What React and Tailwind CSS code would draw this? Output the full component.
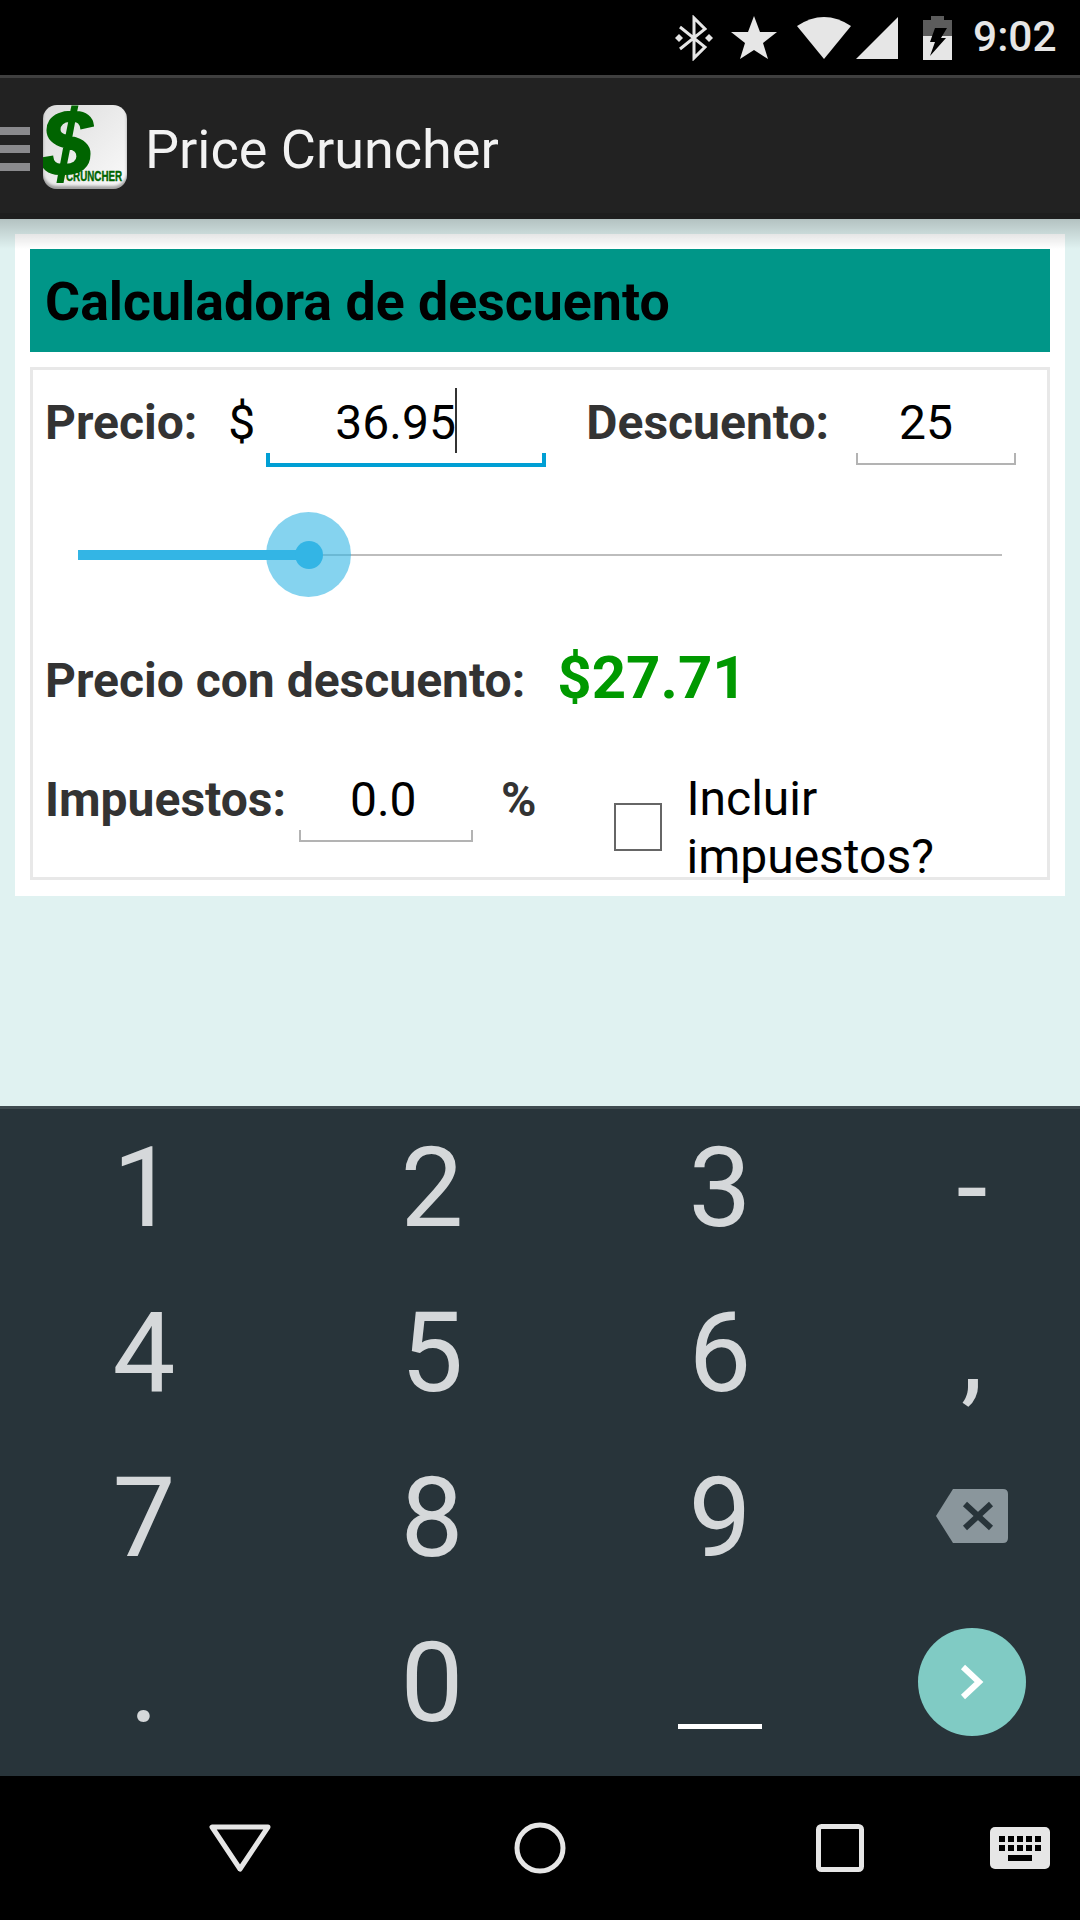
const roboto = "font-['Roboto',sans-serif]";

function Field({ value, width, textClass = "", caret = false, active = false }) {
  const tone = active ? "border-[#009fd4]" : "border-[#b3b3b3]";
  const ticks = active ? "h-[14px] border-x-4 border-b-4" : "h-[12px] border-x-2 border-b-2";
  return (
    <div className={`flex flex-col ${width}`}>
      <div className={`flex h-[64px] items-center pt-[4px] text-[48px] text-black ${textClass}`}>
        <span className="leading-none">{value}</span>
        {caret && <span className="mt-[-5px] ml-[-1px] h-[65px] w-[2px] self-start bg-[#333]" />}
      </div>
      <div className={`${ticks} ${tone}`} />
    </div>
  );
}

function StatusBar() {
  return (
    <div className="flex h-[75px] items-center bg-black pl-[675px] text-[#e6e6e6]">
      <svg width="38" height="46" viewBox="0 0 38 46" className="mr-[18px] shrink-0">
        <path d="M5 12 L30 32 L19 43 V3 L30 14 L5 34" fill="none" stroke="#e6e6e6" strokeWidth="3" />
        <path d="M0 23l4-4 4 4-4 4zM30 23l4-4 4 4-4 4z" fill="#e6e6e6" />
      </svg>
      <svg width="46" height="44" viewBox="0 0 46 44" className="mr-[20px] shrink-0">
        <path d="M23 0 L29 16 L46 16 L32 27 L37 43 L23 34 L9 43 L14 27 L0 16 L17 16 Z" fill="#e6e6e6" />
      </svg>
      <svg width="54" height="44" viewBox="0 0 54 44" className="mr-[5px] shrink-0">
        <path d="M27 43 L0 10 Q27 -8 54 10 Z" fill="#e6e6e6" />
      </svg>
      <svg width="42" height="42" viewBox="0 0 42 42" className="mr-[25px] shrink-0">
        <path d="M42 0 V42 H0 Z" fill="#e6e6e6" />
      </svg>
      <svg width="29" height="44" viewBox="0 0 29 44" className="mr-[21px] shrink-0">
        <path d="M8 0 H21 V4 H29 V20 H0 V4 H8 Z" fill="#5c5c5c" />
        <path d="M0 20 H29 V44 H0 Z" fill="#e6e6e6" />
        <path d="M12 12 H24 L18 22 H23 L7 40 L12 26 H7 Z" fill="#000" />
      </svg>
      <span className={`${roboto} text-[42.5px] font-medium leading-none`}>9:02</span>
    </div>
  );
}

function Logo() {
  return (
    <div className="relative mb-[4px] h-[84px] w-[84px] shrink-0 overflow-hidden rounded-[14px] bg-gradient-to-br from-[#dcdcdc] to-[#fafafa] shadow-[inset_0_-3px_3px_rgba(0,0,0,0.35)]">
      <span className="absolute left-[-2px] top-[-17px] font-['Liberation_Sans',sans-serif] text-[92px] font-bold italic leading-[110px] text-[#006400] [-webkit-text-stroke:2px_#006400]">
        $
      </span>
      <span className="absolute bottom-[6px] right-[5px] origin-right scale-x-[0.7] whitespace-nowrap font-['Liberation_Sans',sans-serif] text-[14px] font-bold leading-none text-[#006400] [-webkit-text-stroke:0.4px_#006400]">
        CRUNCHER
      </span>
    </div>
  );
}

function ActionBar() {
  return (
    <div className="flex h-[144px] items-center border-t-[3px] border-[#3f3f3f] bg-[#222222] shadow-[inset_0_-6px_0_#1e1e1e]">
      <div className="mr-[13px] flex h-[44px] w-[30px] flex-col justify-between">
        <div className="h-[8px] bg-[#8a8a8d]" />
        <div className="h-[8px] bg-[#8a8a8d]" />
        <div className="h-[8px] bg-[#8a8a8d]" />
      </div>
      <Logo />
      <span className={`${roboto} ml-[18px] pt-[1px] text-[54px] text-[#f2f2f2]`}>Price Cruncher</span>
    </div>
  );
}

function Slider() {
  return (
    <div className="relative ml-[45px] mt-[45px] flex h-[86px] w-[924px] items-center">
      <div className="h-[10px] w-[231px] bg-[#33b5e5]" />
      <div className="h-[2px] flex-1 bg-[#bdbdbd]" />
      <div className="absolute left-[188px] top-0 flex h-[85px] w-[85px] items-center justify-center rounded-full bg-[#33b5e5]/60">
        <div className="h-[28px] w-[28px] rounded-full bg-[#33b5e5]" />
      </div>
    </div>
  );
}

function Calculator() {
  return (
    <div className={`${roboto} mx-[15px] bg-white p-[15px] pb-[16px]`}>
      <div className="flex h-[103px] items-center bg-[#009688] pl-[15px] pt-[4px] text-[53.7px] font-bold text-black">
        Calculadora de descuento
      </div>
      <div className="mt-[15px] h-[513px] border-[3px] border-[#e8e8e8] text-[#333]">
        <div className="flex pl-[12px] pt-[19px]">
          <span className="h-[64px] text-[48px] font-bold leading-[68px]">Precio:</span>
          <span className="ml-[31px] h-[64px] text-[48px] leading-[68px] text-black">$</span>
          <Field value="36.95" width="ml-[11px] w-[280px]" textClass="pl-[69px]" caret active />
          <span className="ml-[40px] h-[64px] text-[48px] font-bold leading-[68px]">Descuento:</span>
          <Field value="25" width="ml-[27px] w-[160px]" textClass="pl-[43px]" />
        </div>
        <Slider />
        <div className="mt-[48px] flex items-center pl-[12px]">
          <span className="text-[48px] font-bold leading-[64px]">Precio con descuento:</span>
          <span className="mb-[6px] ml-[32px] text-[60px] font-bold leading-[64px] text-[#009900]">$27.71</span>
        </div>
        <div className="mt-[50px] flex pl-[12px]">
          <span className="h-[64px] text-[48px] font-bold leading-[68px]">Impuestos:</span>
          <Field value="0.0" width="ml-[13px] w-[174px]" textClass="pl-[51px]" />
          <span className="ml-[28px] h-[64px] text-[48px] font-bold leading-[68px]">%</span>
          <div className="ml-[78px] mt-[37px] h-[48px] w-[48px] border-2 border-[#666]" />
          <div className="relative ml-[24px] mt-[4px] text-[48px] leading-[58px] text-black">
            Incluir
            <br />
            impuestos?
          </div>
        </div>
      </div>
    </div>
  );
}

function Backspace() {
  return (
    <svg width="72" height="54" viewBox="0 0 72 54" className="mb-[3px]">
      <path d="M17 0 H67 Q72 0 72 5 V49 Q72 54 67 54 H17 L0 27 Z" fill="#8a969c" />
      <path d="M29 15 L55 39 M55 15 L29 39" stroke="#28343a" strokeWidth="6" fill="none" />
    </svg>
  );
}

const keys = [
  "1", "2", "3", "-",
  "4", "5", "6", ",",
  "7", "8", "9", "back",
  ".", "0", "space", "next",
];

function Key({ value }) {
  if (value === "back") return <Backspace />;
  if (value === "space") return <div className="mt-[88px] h-[5px] w-[84px] bg-white" />;
  if (value === "next") {
    return (
      <div className="mb-[2px] flex h-[108px] w-[108px] items-center justify-center rounded-full bg-[#80cbc4]">
        <svg width="24" height="36" viewBox="0 0 24 36">
          <path d="M3 3 L19 18 L3 33" fill="none" stroke="#fff" strokeWidth="6" />
        </svg>
      </div>
    );
  }
  return <span className="text-[112px] leading-none text-[#d5d8da]">{value}</span>;
}

function Keyboard() {
  return (
    <div className={`${roboto} grid h-[670px] grid-cols-[288px_288px_288px_216px] grid-rows-[165px_165px_165px_165px] border-t-[3px] border-[#3f4b50] bg-[#28343a]`}>
      {keys.map((k) => (
        <div key={k} className="flex items-center justify-center pb-[8px]">
          <Key value={k} />
        </div>
      ))}
    </div>
  );
}

function NavBar() {
  return (
    <div className="flex h-[144px] items-center bg-black pl-[209px]">
      <svg width="62" height="48" viewBox="0 0 62 48" className="shrink-0">
        <path d="M3 3 H59 L31 45 Z" fill="none" stroke="#e6e6e6" strokeWidth="5" strokeLinejoin="round" />
      </svg>
      <svg width="52" height="52" viewBox="0 0 52 52" className="ml-[243px] shrink-0">
        <circle cx="26" cy="26" r="23" fill="none" stroke="#e6e6e6" strokeWidth="5" />
      </svg>
      <svg width="48" height="48" viewBox="0 0 48 48" className="ml-[250px] shrink-0">
        <rect x="2.5" y="2.5" width="43" height="43" rx="3" fill="none" stroke="#e6e6e6" strokeWidth="5" />
      </svg>
      <svg width="60" height="42" viewBox="0 0 60 42" className="ml-[126px] shrink-0">
        <rect width="60" height="42" rx="5" fill="#e6e6e6" />
        <path d="M9 9h6v6H9zM18 9h6v6h-6zM27 9h6v6h-6zM36 9h6v6h-6zM45 9h6v6h-6zM9 18h6v6H9zM18 18h6v6h-6zM27 18h6v6h-6zM36 18h6v6h-6zM45 18h6v6h-6zM18 28h24v6H18z" fill="#000" />
      </svg>
    </div>
  );
}

export default function App() {
  return (
    <div className="flex h-[1920px] w-[1080px] flex-col overflow-hidden bg-[#e0f2f1]">
      <StatusBar />
      <ActionBar />
      <div className="relative flex-1 pt-[15px]">
        <Calculator />
        <div className="pointer-events-none absolute inset-x-0 top-0 h-[30px] bg-gradient-to-b from-black/20 to-transparent" />
      </div>
      <Keyboard />
      <NavBar />
    </div>
  );
}
